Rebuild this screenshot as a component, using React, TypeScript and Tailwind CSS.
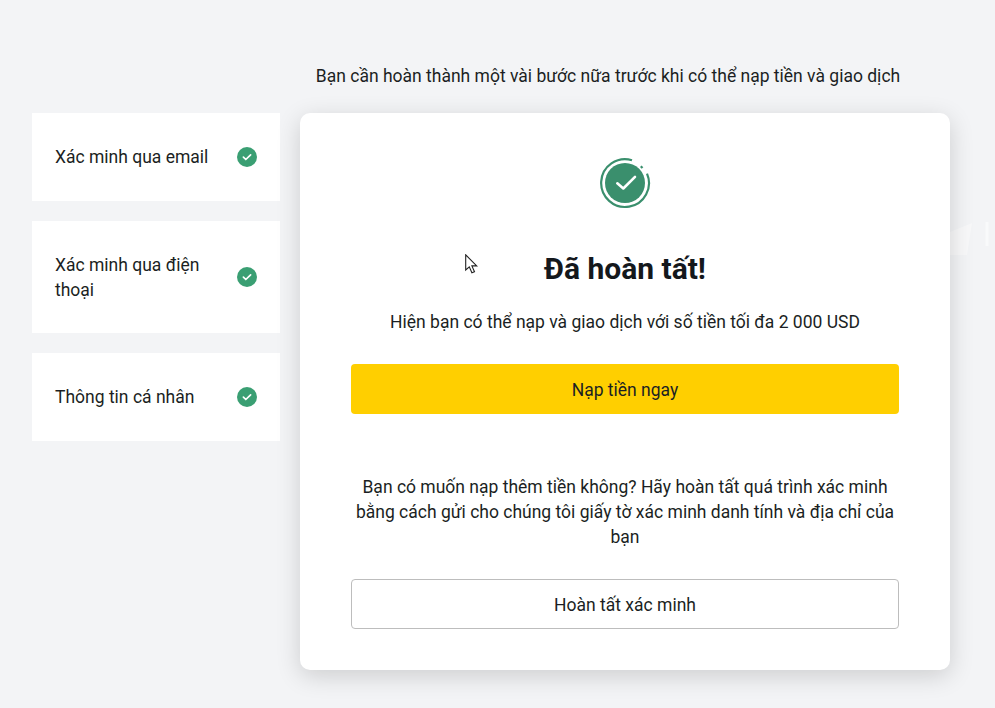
import React from "react";

const steps = [
  { label: "Xác minh qua email", height: "h-[88px]", nudge: "" },
  { label: "Xác minh qua điện thoại", height: "h-[112px]", nudge: "translate-y-px" },
  { label: "Thông tin cá nhân", height: "h-[88px]", nudge: "" },
];

const SmallCheck: React.FC = () => (
  <svg width="20" height="20" viewBox="0 0 20 20" className="shrink-0">
    <circle cx="10" cy="10" r="10" fill="#3a9f73" />
    <path d="M6.4 10.2l2.4 2.3 4.8-4.6" fill="none" stroke="#fff" strokeWidth="1.7" strokeLinecap="round" strokeLinejoin="round" />
  </svg>
);

const BigCheck: React.FC = () => (
  <svg width="52" height="52" viewBox="0 0 52 52">
    <circle cx="26" cy="26" r="20" fill="#3a8f6d" />
    <path
      d="M33 3.2A23.9 23.9 0 1 0 48 16.6"
      fill="none"
      stroke="#3a8f6d"
      strokeWidth="2.2"
    />
    <path d="M41.8 9.2L43.5 11" fill="none" stroke="#3a8f6d" strokeWidth="2.2" />
    <path d="M18.3 26.3l6 5.2 11.7-11.7" fill="none" stroke="#fff" strokeWidth="2.6" strokeLinecap="round" strokeLinejoin="round" />
  </svg>
);

export default function App() {
  return (
    <div className="relative h-[708px] w-[995px] overflow-hidden bg-[#f3f4f6] font-['Roboto',sans-serif] text-[#1b1f23]">
      {/* faint watermark showing through at the right edge */}
      <svg width="45" height="40" viewBox="0 0 45 40" className="absolute left-[950px] top-[220px]">
        <path d="M0 12L22 3 17 35H0z" fill="#fff" fillOpacity="0.4" />
        <path d="M37 2V26" stroke="#fff" strokeOpacity="0.5" strokeWidth="3" />
      </svg>
      <div className="relative flex gap-5 pl-8 pt-[62px]">
        <div className="flex w-[248px] flex-col gap-5 pt-[51px]">
          {steps.map((s) => (
            <div key={s.label} className={`flex items-center justify-between bg-white pl-[23px] pr-[23px] text-[17.5px] leading-[25px] ${s.height}`}>
              <span className={`w-[160px] ${s.nudge}`}>{s.label}</span>
              <SmallCheck />
            </div>
          ))}
        </div>
        <div className="w-[650px]">
          <p className="h-[51px] pr-[34px] pt-[2px] text-center text-[17.5px] leading-[25px]">
            Bạn cần hoàn thành một vài bước nữa trước khi có thể nạp tiền và giao dịch
          </p>
          <div className="flex h-[557px] flex-col items-center rounded-[10px] bg-white px-[51px] pt-[44px] shadow-[0_6px_24px_rgba(0,0,0,0.16)]">
            <BigCheck />
            <h1 className="mt-[41px] text-[30px] font-bold leading-[38px] text-[#14181c]">Đã hoàn tất!</h1>
            <p className="mt-[22px] text-center text-[17.5px] leading-[25px]">
              Hiện bạn có thể nạp và giao dịch với số tiền tối đa 2 000 USD
            </p>
            <button className="mt-[29px] h-[50px] w-full rounded-[4px] bg-[#ffcf00] pt-[2px] text-[17.5px]">Nạp tiền ngay</button>
            <p className="mt-[61px] text-center text-[17.5px] leading-[25px]">
              Bạn có muốn nạp thêm tiền không? Hãy hoàn tất quá trình xác minh bằng cách gửi cho chúng tôi giấy tờ xác minh danh tính và địa chỉ của bạn
            </p>
            <button className="mt-[29px] h-[50px] w-full rounded-[4px] border border-[#bdbdbd] bg-white pt-[2px] text-[17.5px]">Hoàn tất xác minh</button>
          </div>
        </div>
      </div>
      {/* mouse pointer captured in the screenshot */}
      <svg width="14" height="22" viewBox="0 0 14 22" className="absolute left-[465px] top-[254px]">
        <path d="M0.7 0.8V16l3.6-3.2 2.6 6 2.6-1.1-2.6-5.8h4.8z" fill="#fff" stroke="#222" strokeWidth="1.1" />
      </svg>
    </div>
  );
}
